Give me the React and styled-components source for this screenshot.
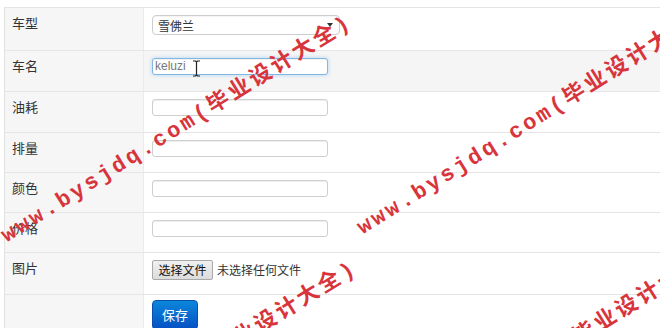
import React from "react";
import styled, { createGlobalStyle } from "styled-components";

const GlobalStyle = createGlobalStyle`
  html, body { margin: 0; padding: 0; background: #fff; }
  body { font-family: "Liberation Sans", "Noto Sans CJK SC", sans-serif; }
`;

const Page = styled.div`
  position: relative;
  width: 660px;
  height: 328px;
  overflow: hidden;
  box-sizing: border-box;
  padding: 7px 0 0 4px;
`;

const Table = styled.div`
  border-top: 1px solid #e4e4e4;
  border-left: 1px solid #e2e2e2;
`;

const Row = styled.div`
  display: grid;
  grid-template-columns: 139px 1fr;
  height: ${(p) => p.$h}px;
  border-bottom: ${(p) => (p.$last ? "none" : "1px solid #e5e5e5")};
  background: ${(p) => (p.$hover ? "#f5f5f5" : "#fff")};
`;

const Label = styled.div`
  background: #f6f6f6;
  border-right: 1px solid #ebebeb;
  padding: 7px 0 0 7px;
  font-family: "Noto Sans CJK SC", sans-serif;
  font-size: 13px;
  line-height: 16px;
  color: #333;
`;

const Cell = styled.div`
  position: relative;
  padding: ${(p) => p.$pt ?? 7}px 0 0 8px;
  display: flex;
  align-items: flex-start;
  gap: 4px;
`;

const TextInput = styled.div`
  box-sizing: border-box;
  width: 176px;
  height: 17px;
  border: 1px solid ${(p) => (p.$focus ? "#84b6e2" : "#cfcfcf")};
  border-radius: 3px;
  background: #fff;
  box-shadow: ${(p) =>
    p.$focus
      ? "inset 0 1px 1px rgba(0,0,0,.06), 0 0 4px rgba(82,168,236,.45)"
      : "inset 0 1px 1px rgba(0,0,0,.07)"};
  padding-left: 2px;
  font-family: "Liberation Sans", sans-serif;
  font-size: 12px;
  line-height: 15px;
  color: #777;
`;

const SelectBox = styled.div`
  box-sizing: border-box;
  width: 188px;
  height: 20px;
  border: 1px solid #cdcdcd;
  border-radius: 4px;
  background: #fff;
  box-shadow: inset 0 1px 1px rgba(0,0,0,.05);
  display: flex;
  align-items: center;
  justify-content: space-between;
  padding: 0 6px 0 5px;
  font-family: "Noto Sans CJK SC", sans-serif;
  font-size: 12px;
  color: #333;
`;

const FileButton = styled.button`
  box-sizing: border-box;
  height: 20px;
  width: 61px;
  padding: 0;
  border: 1px solid #a9a9a9;
  border-radius: 2px;
  background: linear-gradient(#f0f0f0, #dcdcdc);
  font-family: "Noto Sans CJK SC", sans-serif;
  font-size: 12px;
  line-height: 18px;
  color: #111;
`;

const FileText = styled.span`
  font-family: "Noto Sans CJK SC", sans-serif;
  font-size: 12px;
  line-height: 20px;
  color: #333;
`;

const SaveButton = styled.button`
  box-sizing: border-box;
  width: 46px;
  height: 30px;
  padding: 0;
  border: 1px solid #0a4fae;
  border-radius: 4px;
  background: linear-gradient(#0b87da, #0550c4);
  color: #fff;
  font-family: "Noto Sans CJK SC", sans-serif;
  font-size: 13px;
  line-height: 26px;
`;

const Cursor = styled.svg`
  position: absolute;
  left: 48px;
  top: 9px;
`;

const Watermark = styled.span`
  position: absolute;
  left: ${(p) => p.$x}px;
  top: ${(p) => p.$y}px;
  transform-origin: 0 0;
  transform: rotate(-32deg);
  white-space: nowrap;
  font-family: "Liberation Mono", "Noto Sans CJK SC", monospace;
  font-weight: bold;
  font-size: 22px;
  line-height: 1;
  letter-spacing: 3px;
  color: #d8343c;
  pointer-events: none;
`;

const WM_TEXT = "www.bysjdq.com(毕业设计大全)";
const marks = [
  { x: -2, y: 229 },
  { x: 354, y: 221 },
  { x: 3, y: 475 },
  { x: 364, y: 460 },
];

export default function App() {
  return (
    <>
      <GlobalStyle />
      <Page>
        <Table>
          <Row $h={42}>
            <Label>车型</Label>
            <Cell>
              <SelectBox>
                <span>雪佛兰</span>
                <svg width="6" height="4" viewBox="0 0 6 4">
                  <path d="M0 0h6L3 4z" fill="#333" />
                </svg>
              </SelectBox>
            </Cell>
          </Row>
          <Row $h={40} $hover>
            <Label>车名</Label>
            <Cell>
              <TextInput $focus>keluzi</TextInput>
              <Cursor width="9" height="17" viewBox="0 0 9 17">
                <path
                  d="M1 1h2.5L4.5 2l1-1H8M4.5 2v13M1 16h2.5l1-1 1 1H8"
                  fill="none"
                  stroke="#222"
                  strokeWidth="1.2"
                />
              </Cursor>
            </Cell>
          </Row>
          <Row $h={40}>
            <Label>油耗</Label>
            <Cell>
              <TextInput />
            </Cell>
          </Row>
          <Row $h={39}>
            <Label>排量</Label>
            <Cell>
              <TextInput />
            </Cell>
          </Row>
          <Row $h={39}>
            <Label>颜色</Label>
            <Cell>
              <TextInput />
            </Cell>
          </Row>
          <Row $h={39}>
            <Label>价格</Label>
            <Cell>
              <TextInput />
            </Cell>
          </Row>
          <Row $h={41}>
            <Label>图片</Label>
            <Cell>
              <FileButton>选择文件</FileButton>
              <FileText>未选择任何文件</FileText>
            </Cell>
          </Row>
          <Row $h={40} $last>
            <Label />
            <Cell $pt={5}>
              <SaveButton>保存</SaveButton>
            </Cell>
          </Row>
        </Table>
        {marks.map((m, i) => (
          <Watermark key={i} $x={m.x} $y={m.y}>
            {WM_TEXT}
          </Watermark>
        ))}
      </Page>
    </>
  );
}
